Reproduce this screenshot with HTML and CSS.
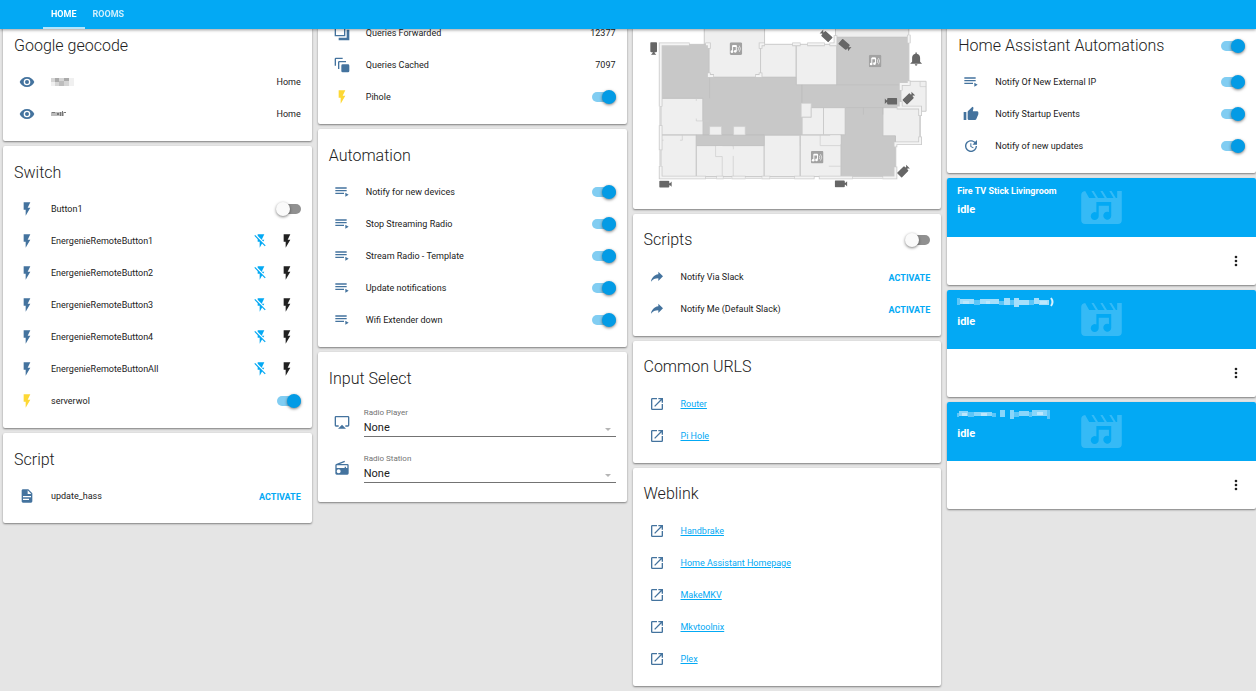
FILE: index.html
```html
<!DOCTYPE html>
<html lang="en">
<head>
<meta charset="utf-8">
<meta name="viewport" content="width=device-width, initial-scale=1">
<title>Home Assistant</title>
<link rel="stylesheet" href="styles.css">
</head>
<body>
<svg class="sprite" aria-hidden="true">
  <symbol id="eye" viewBox="0 0 24 24"><path d="M12,9A3,3 0 0,0 9,12A3,3 0 0,0 12,15A3,3 0 0,0 15,12A3,3 0 0,0 12,9M12,17A5,5 0 0,1 7,12A5,5 0 0,1 12,7A5,5 0 0,1 17,12A5,5 0 0,1 12,17M12,4.5C7,4.5 2.73,7.61 1,12C2.73,16.39 7,19.5 12,19.5C17,19.5 21.27,16.39 23,12C21.27,7.61 17,4.5 12,4.5Z"/></symbol>
  <symbol id="flash" viewBox="0 0 24 24"><path d="M7,2V13H10V22L17,10H13L17,2H7Z"/></symbol>
  <symbol id="flash-off" viewBox="0 0 24 24"><path d="M17,10H13L17,2H7V4.18L15.46,12.64M3.27,3L2,4.27L7,9.27V13H10V22L13.58,15.86L17.73,20L19,18.73L3.27,3Z"/></symbol>
  <symbol id="document" viewBox="0 0 24 24"><path d="M13,9H18.5L13,3.5V9M6,2H14L20,8V20A2,2 0 0,1 18,22H6C4.89,22 4,21.1 4,20V4C4,2.89 4.89,2 6,2M15,18V16H6V18H15M18,14V12H6V14H18Z"/></symbol>
  <symbol id="playlist" viewBox="0 0 24 24"><path d="M19,9H2V11H19V9M19,5H2V7H19V5M2,15H15V13H2V15M17,13V19L22,16L17,13Z"/></symbol>
  <symbol id="open" viewBox="0 0 24 24"><path d="M14,3V5H17.59L7.76,14.83L9.17,16.24L19,6.41V10H21V3M19,19H5V5H12V3H5C3.89,3 3,3.9 3,5V19A2,2 0 0,0 5,21H19A2,2 0 0,0 21,19V12H19V19Z"/></symbol>
  <symbol id="share" viewBox="0 0 24 24"><path d="M21,11L14,4V8C7,9 4,14 3,19C5.5,15.5 9,13.9 14,13.9V18L21,11Z"/></symbol>
  <symbol id="thumb" viewBox="0 0 24 24"><path d="M23,10C23,8.89 22.1,8 21,8H14.68L15.64,3.43C15.66,3.33 15.67,3.22 15.67,3.11C15.67,2.7 15.5,2.32 15.23,2.05L14.17,1L7.59,7.58C7.22,7.95 7,8.45 7,9V19A2,2 0 0,0 9,21H18C18.83,21 19.54,20.5 19.84,19.78L22.86,12.73C22.95,12.5 23,12.26 23,12V10M1,21H5V9H1V21Z"/></symbol>
  <symbol id="update" viewBox="0 0 24 24"><path d="M21,10.12H14.22L16.96,7.3C14.23,4.6 9.81,4.5 7.08,7.2C4.35,9.91 4.35,14.28 7.08,17C9.81,19.7 14.23,19.7 16.96,17C18.32,15.65 19,14.08 19,12.1H21C21,14.08 20.12,16.65 18.36,18.39C14.85,21.87 9.15,21.87 5.64,18.39C2.14,14.92 2.11,9.28 5.62,5.81C9.13,2.34 14.76,2.34 18.27,5.81L21,3V10.12M12.5,8V12.25L16,14.33L15.28,15.54L11,13V8H12.5Z"/></symbol>
  <symbol id="airplay" viewBox="0 0 24 24"><path d="M6,22H18L12,16M21,3H3A2,2 0 0,0 1,5V17A2,2 0 0,0 3,19H7V17H3V5H21V17H17V19H21A2,2 0 0,0 23,17V5A2,2 0 0,0 21,3Z"/></symbol>
  <symbol id="radio" viewBox="0 0 24 24"><path d="M20,6A2,2 0 0,1 22,8V20A2,2 0 0,1 20,22H4A2,2 0 0,1 2,20V8C2,7.15 2.53,6.42 3.28,6.13L15.71,1L16.47,2.83L8.83,6H20M20,8H4V12H16V10H18V12H20V8M7,14A3,3 0 0,0 4,17A3,3 0 0,0 7,20A3,3 0 0,0 10,17A3,3 0 0,0 7,14Z"/></symbol>
  <symbol id="forwarded" viewBox="0 0 24 24"><path fill-rule="evenodd" d="M1,1H17V17H1ZM3,3V15H15V3ZM19,7H23V23H7V19H19Z"/></symbol>
  <symbol id="cached" viewBox="0 0 24 24"><path d="M13,11H21A2,2 0 0,1 23,13V21A2,2 0 0,1 21,23H13A2,2 0 0,1 11,21V13A2,2 0 0,1 13,11ZM6,18V8A2,2 0 0,1 8,6H18V8H8V18ZM1,13V3A2,2 0 0,1 3,1H13V3H3V13Z"/></symbol>
  <symbol id="dots" viewBox="0 0 24 24"><path d="M12,16A2,2 0 0,1 14,18A2,2 0 0,1 12,20A2,2 0 0,1 10,18A2,2 0 0,1 12,16M12,10A2,2 0 0,1 14,12A2,2 0 0,1 12,14A2,2 0 0,1 10,12A2,2 0 0,1 12,10M12,4A2,2 0 0,1 14,6A2,2 0 0,1 12,8A2,2 0 0,1 10,6A2,2 0 0,1 12,4Z"/></symbol>
  <symbol id="media" viewBox="0 0 123 100"><path fill-rule="evenodd" d="M12,0L24,21H44L31,0H38L51,21H71L58,0H65L78,21H98L85,0H92L105,21H109V0H123V88Q123,100 111,100H12Q0,100 0,88V12Q0,2 12,0ZM46,33V65A12,12 0 1 0 53,76V45H84V64A12,12 0 1 0 91,75V33Z"/></symbol>
  <symbol id="camera" viewBox="-20 -12 40 24"><path d="M-17,-10H8Q11,-10 11,-7V-3H13L18,-8V8L13,3H11V7Q11,10 8,10H-17Q-19,10 -19,8V-8Q-19,-10 -17,-10Z"/></symbol>
  <symbol id="speaker" viewBox="0 0 38 38"><rect width="38" height="38" rx="5" fill="#a2a2a2"/><g fill="none" stroke="#fff" stroke-width="3"><path d="M9,27V10H20V26"/><path d="M25,14Q29,19 25,25M29,10Q36,19 29,29" stroke-width="2"/></g><path fill="#fff" d="M9,9H21V14H9Z"/><circle cx="7" cy="28" r="4" fill="#fff"/><circle cx="17" cy="27" r="4" fill="#fff"/></symbol>
</svg>

<header class="topbar">
  <nav class="tabs">
    <a class="tab tab--active" href="#home">HOME</a>
    <a class="tab" href="#rooms">ROOMS</a>
  </nav>
</header>

<main class="board">
  <div class="column">
    <section class="card card--first">
      <div class="card-head"><h2>Google geocode</h2></div>
      <div class="row"><svg class="icon"><use href="#eye"/></svg>
        <span class="name"><svg class="redacted" viewBox="0 0 24 8"><path fill="#d5d5d5" d="M0,0H18V4H0ZM4,4H18V8H4Z"/><path fill="#aaa" d="M4,0H8V4H4ZM13,0H18V3H13Z"/><path fill="#bdbdbd" d="M8,3H13V8H8Z"/><path fill="#f0f0f0" d="M18,0H23V8H18ZM0,4H4V8H0Z"/></svg></span>
        <span class="value">Home</span></div>
      <div class="row"><svg class="icon"><use href="#eye"/></svg>
        <span class="name"><svg class="redacted" viewBox="0 0 24 8"><path fill="#bbb" d="M0,2H13V6H0Z"/><path fill="#777" d="M1,2H4V3H1ZM6,3H8V5H6ZM9,2H10V6H9ZM11,1H12V6H11ZM13,2H15V3H13Z"/></svg></span>
        <span class="value">Home</span></div>
    </section>

    <section class="card">
      <div class="card-head"><h2>Switch</h2></div>
      <div class="row"><svg class="icon"><use href="#flash"/></svg><label class="name" for="b1">Button1</label><input class="toggle" type="checkbox" id="b1"></div>
      <div class="row"><svg class="icon"><use href="#flash"/></svg><span class="name">EnergenieRemoteButton1</span><button class="power power--off" aria-label="Turn off"><svg class="icon-sm"><use href="#flash-off"/></svg></button><button class="power" aria-label="Turn on"><svg class="icon-sm"><use href="#flash"/></svg></button></div>
      <div class="row"><svg class="icon"><use href="#flash"/></svg><span class="name">EnergenieRemoteButton2</span><button class="power power--off" aria-label="Turn off"><svg class="icon-sm"><use href="#flash-off"/></svg></button><button class="power" aria-label="Turn on"><svg class="icon-sm"><use href="#flash"/></svg></button></div>
      <div class="row"><svg class="icon"><use href="#flash"/></svg><span class="name">EnergenieRemoteButton3</span><button class="power power--off" aria-label="Turn off"><svg class="icon-sm"><use href="#flash-off"/></svg></button><button class="power" aria-label="Turn on"><svg class="icon-sm"><use href="#flash"/></svg></button></div>
      <div class="row"><svg class="icon"><use href="#flash"/></svg><span class="name">EnergenieRemoteButton4</span><button class="power power--off" aria-label="Turn off"><svg class="icon-sm"><use href="#flash-off"/></svg></button><button class="power" aria-label="Turn on"><svg class="icon-sm"><use href="#flash"/></svg></button></div>
      <div class="row"><svg class="icon"><use href="#flash"/></svg><span class="name">EnergenieRemoteButtonAll</span><button class="power power--off" aria-label="Turn off"><svg class="icon-sm"><use href="#flash-off"/></svg></button><button class="power" aria-label="Turn on"><svg class="icon-sm"><use href="#flash"/></svg></button></div>
      <div class="row"><svg class="icon icon--on"><use href="#flash"/></svg><label class="name" for="wol">serverwol</label><input class="toggle" type="checkbox" id="wol" checked></div>
    </section>

    <section class="card">
      <div class="card-head"><h2>Script</h2></div>
      <div class="row"><svg class="icon"><use href="#document"/></svg><span class="name">update_hass</span><button class="activate">ACTIVATE</button></div>
    </section>
  </div>

  <div class="column">
    <section class="card card--list-first">
      <div class="row"><svg class="icon"><use href="#forwarded"/></svg><span class="name">Queries Forwarded</span><span class="value">12377</span></div>
      <div class="row"><svg class="icon"><use href="#cached"/></svg><span class="name">Queries Cached</span><span class="value">7097</span></div>
      <div class="row"><svg class="icon icon--on"><use href="#flash"/></svg><label class="name" for="pihole">Pihole</label><input class="toggle" type="checkbox" id="pihole" checked></div>
    </section>

    <section class="card">
      <div class="card-head"><h2>Automation</h2></div>
      <div class="row"><svg class="icon"><use href="#playlist"/></svg><label class="name" for="a1">Notify for new devices</label><input class="toggle" type="checkbox" id="a1" checked></div>
      <div class="row"><svg class="icon"><use href="#playlist"/></svg><label class="name" for="a2">Stop Streaming Radio</label><input class="toggle" type="checkbox" id="a2" checked></div>
      <div class="row"><svg class="icon"><use href="#playlist"/></svg><label class="name" for="a3">Stream Radio - Template</label><input class="toggle" type="checkbox" id="a3" checked></div>
      <div class="row"><svg class="icon"><use href="#playlist"/></svg><label class="name" for="a4">Update notifications</label><input class="toggle" type="checkbox" id="a4" checked></div>
      <div class="row"><svg class="icon"><use href="#playlist"/></svg><label class="name" for="a5">Wifi Extender down</label><input class="toggle" type="checkbox" id="a5" checked></div>
    </section>

    <section class="card">
      <div class="card-head"><h2>Input Select</h2></div>
      <div class="row row--field"><svg class="icon"><use href="#airplay"/></svg>
        <div class="field"><label for="player">Radio Player</label><select id="player"><option>None</option></select><svg class="caret" viewBox="0 0 6 3"><path d="M0,0H6L3,3Z"/></svg></div></div>
      <div class="row row--field"><svg class="icon"><use href="#radio"/></svg>
        <div class="field"><label for="station">Radio Station</label><select id="station"><option>None</option></select><svg class="caret" viewBox="0 0 6 3"><path d="M0,0H6L3,3Z"/></svg></div></div>
    </section>
  </div>

  <div class="column">
    <section class="card card--map">
      <svg class="floorplan" viewBox="0 0 927 567" role="img" aria-label="Floor plan">
        <g fill="#efefef" stroke="#cbcbcb" stroke-width="3">
          <path d="M214,10H395V73H383V172H228V73H214Z"/>
          <path d="M383,73H490V172H383ZM490,73H612V195H490ZM608,10H828V52H608Z"/>
          <path d="M804,184H880V274H866V260H804ZM750,263H862V369H788V348H750Z"/>
          <path d="M84,235H210V303H230V345H84ZM84,345H190V470H84ZM190,377H394V470H190Z"/>
          <path d="M394,346H502V470H394ZM502,345H625V470H502ZM507,263H637V345H507ZM572,263V345"/>
        </g>
        <g fill="#c8c8c8" stroke="#c0c0c0" stroke-width="2">
          <path d="M84,73H228V172H490V195H507V345H210V235H84Z"/>
          <path d="M612,52H828V195H804V263H750V348H788V470H625V345H638V263H507V195H612Z"/>
          <path d="M190,345H394V377H190Z"/>
        </g>
        <path fill="none" stroke="#bcbcbc" stroke-width="2" d="M230,172V235M507,195V250M612,195H804M692,263V284M638,263H750V284M210,345H394"/>
        <g fill="#efefef" stroke="#cbcbcb" stroke-width="2">
          <path d="M505,250H535V292H505ZM230,320H266V345H230ZM302,320H337V345H302Z"/>
          <path fill="none" d="M190,235V243M190,296V303H228M148,345V361H141M84,361H92M248,378V410H268V470M268,380H300M301,378V388M301,408V470M562,345V377H625M588,439H625M535,263V292H507V345M862,184V200H880M502,377V345"/>
        </g>
        <path fill="#efefef" d="M250,379H299V387H250ZM592,346H623V372H592Z"/>
        <path id="wall-lines" fill="none" stroke="#cacaca" stroke-width="11" d="M170,73H83V260M83,316V391M83,438V473H219M228,86V73H217M383,86V73H396M228,158V168H243M383,158V168H367M478,73H503M523,73H576M590,73H608V46M828,44V70M828,182V192H804V212M804,244V262M792,263H862V288M862,350V370H788V382M788,440V473H749M660,473H558M545,473H484M412,473H386M338,473H296M272,473H250"/>
        <path fill="none" stroke="#f4f4f4" stroke-width="6" d="M168,73H83V258M83,318V389M83,440V473H217M228,84V73H219M383,84V73H394M228,160V168H241M383,160V168H369M480,73H501M525,73H574M592,73H608V48M828,46V68M828,184V192H804V210M804,246V260M794,263H862V286M862,352V370H788V380M788,442V473H751M658,473H560M543,473H486M410,473H388M336,473H298M270,473H252"/>
        <path fill="none" stroke="#cacaca" stroke-width="3" d="M81,260V316M81,391V438M219,475H250M272,475H296M338,475H386M412,475H484M660,475H749M789,382V440M862,288V350M828,70V182"/>
        <g fill="#666">
          <use href="#camera" x="-20" y="-12" width="40" height="24" transform="translate(98 493)"/>
          <use href="#camera" x="-20" y="-12" width="40" height="24" transform="translate(625 492)"/>
          <use href="#camera" x="-20" y="-12" width="40" height="24" transform="translate(774 244) rotate(180)"/>
          <use href="#camera" x="-20" y="-12" width="40" height="24" transform="translate(62 86) rotate(90)"/>
          <use href="#camera" x="-20" y="-12" width="40" height="24" transform="translate(579 47) rotate(222)"/>
          <use href="#camera" x="-20" y="-12" width="40" height="24" transform="translate(637 76) rotate(40)"/>
          <use href="#camera" x="-20" y="-12" width="40" height="24" transform="translate(829 234) rotate(-45)"/>
          <use href="#camera" x="-20" y="-12" width="40" height="24" transform="translate(813 453) rotate(-45)"/>
          <path transform="translate(826 93) scale(2)" d="M14,20A2,2 0 0,1 12,22A2,2 0 0,1 10,20H14M12,2A1,1 0 0,1 13,3V4.08C15.84,4.56 18,7.03 18,10V16L21,19H3L6,16V10C6,7.03 8.16,4.56 11,4.08V3A1,1 0 0,1 12,2Z"/>
        </g>
        <use href="#speaker" x="290" y="67" width="38" height="38"/>
        <use href="#speaker" x="708" y="104" width="38" height="38"/>
        <use href="#speaker" x="534" y="393" width="38" height="38"/>
      </svg>
    </section>

    <section class="card">
      <div class="card-head"><h2>Scripts</h2><input class="toggle" type="checkbox" aria-label="Scripts"></div>
      <div class="row"><svg class="icon"><use href="#share"/></svg><span class="name">Notify Via Slack</span><button class="activate">ACTIVATE</button></div>
      <div class="row"><svg class="icon"><use href="#share"/></svg><span class="name">Notify Me (Default Slack)</span><button class="activate">ACTIVATE</button></div>
    </section>

    <section class="card">
      <div class="card-head"><h2>Common URLS</h2></div>
      <div class="row"><svg class="icon"><use href="#open"/></svg><a class="name" href="#router">Router</a></div>
      <div class="row"><svg class="icon"><use href="#open"/></svg><a class="name" href="#pihole">Pi Hole</a></div>
    </section>

    <section class="card">
      <div class="card-head"><h2>Weblink</h2></div>
      <div class="row"><svg class="icon"><use href="#open"/></svg><a class="name" href="#handbrake">Handbrake</a></div>
      <div class="row"><svg class="icon"><use href="#open"/></svg><a class="name" href="#homepage">Home Assistant Homepage</a></div>
      <div class="row"><svg class="icon"><use href="#open"/></svg><a class="name" href="#makemkv">MakeMKV</a></div>
      <div class="row"><svg class="icon"><use href="#open"/></svg><a class="name" href="#mkvtoolnix">Mkvtoolnix</a></div>
      <div class="row"><svg class="icon"><use href="#open"/></svg><a class="name" href="#plex">Plex</a></div>
    </section>
  </div>

  <div class="column">
    <section class="card card--first">
      <div class="card-head"><h2>Home Assistant Automations</h2><input class="toggle" type="checkbox" aria-label="Home Assistant Automations" checked></div>
      <div class="row"><svg class="icon"><use href="#playlist"/></svg><label class="name" for="h1">Notify Of New External IP</label><input class="toggle" type="checkbox" id="h1" checked></div>
      <div class="row"><svg class="icon"><use href="#thumb"/></svg><label class="name" for="h2">Notify Startup Events</label><input class="toggle" type="checkbox" id="h2" checked></div>
      <div class="row"><svg class="icon"><use href="#update"/></svg><label class="name" for="h3">Notify of new updates</label><input class="toggle" type="checkbox" id="h3" checked></div>
    </section>

    <section class="player">
      <div class="player-banner">
        <div class="player-text"><span class="player-name">Fire TV Stick Livingroom</span><span class="player-state">idle</span></div>
        <svg class="cover"><use href="#media"/></svg>
      </div>
      <div class="player-controls"><button class="more" aria-label="More"><svg class="icon"><use href="#dots"/></svg></button></div>
    </section>
    <section class="player">
      <div class="player-banner">
        <div class="player-text"><span class="player-name"><svg class="redacted-title" viewBox="0 0 98 10"><path fill="#a6dffb" d="M2,2H17V7H2ZM23,2H42V7H23ZM47,1H53V8H47ZM57,1H62V10H57ZM62,3H72V8H62ZM77,1H82V7H77ZM82,3H92V8H82Z"/><path fill="#5dc6f8" d="M0,1H3V8H0ZM17,3H23V8H17ZM42,4H47V8H42ZM53,3H57V8H53ZM72,3H77V8H72Z"/><path fill="#bce7fc" d="M6,4H12V7H6ZM29,4H33V7H29ZM83,4H90V7H83Z"/><path fill="none" stroke="#d8f1fd" stroke-width="2" d="M94,1Q97,5 94,9"/></svg></span><span class="player-state">idle</span></div>
        <svg class="cover"><use href="#media"/></svg>
      </div>
      <div class="player-controls"><button class="more" aria-label="More"><svg class="icon"><use href="#dots"/></svg></button></div>
    </section>
    <section class="player">
      <div class="player-banner">
        <div class="player-text"><span class="player-name"><svg class="redacted-title" viewBox="0 0 98 10"><path fill="#8ad6fa" d="M2,2H11V7H2ZM17,3H35V7H17ZM43,1H48V8H43ZM53,1H57V10H53ZM62,2H72V7H62ZM75,1H90V7H75Z"/><path fill="#5dc6f8" d="M0,4H2V8H0ZM11,3H17V8H11ZM35,4H39V8H35ZM57,3H62V8H57ZM72,3H75V8H72ZM90,1H93V10H90Z"/><path fill="#bce7fc" d="M5,4H10V7H5ZM24,4H30V7H24ZM80,3H86V6H80Z"/></svg></span><span class="player-state">idle</span></div>
        <svg class="cover"><use href="#media"/></svg>
      </div>
      <div class="player-controls"><button class="more" aria-label="More"><svg class="icon"><use href="#dots"/></svg></button></div>
    </section>
  </div>
</main>
</body>
</html>
```
FILE: styles.css
```css
* { box-sizing: border-box; }

body {
  margin: 0;
  background: #e5e5e5;
  color: #212121;
  font: 400 9px/16px Roboto, "Liberation Sans", sans-serif;
}

button {
  margin: 0;
  padding: 0;
  border: 0;
  background: none;
  font: inherit;
  color: inherit;
  cursor: pointer;
}

svg { display: block; fill: currentColor; }
.sprite { position: absolute; width: 0; height: 0; }

/* Top bar stays above the scrolled board */
.topbar {
  position: fixed;
  z-index: 1;
  top: 0;
  left: 0;
  right: 0;
  height: 29px;
  padding-left: 43px;
  background: #03a9f4;
  box-shadow: 0 1px 3px rgba(0, 0, 0, .4);
}
.tabs { display: flex; height: 100%; }
.tab {
  display: flex;
  align-items: center;
  padding: 0 8px;
  border-bottom: 2px solid transparent;
  color: rgba(255, 255, 255, .8);
  font-weight: 700;
  text-decoration: none;
}
.tab--active { color: #fff; border-color: #b3e5fc; }

.board {
  display: grid;
  grid-template-columns: repeat(4, minmax(0, 1fr));
  column-gap: 6px;
  padding: 14px 0 4px 3px;
}
.column { display: flex; flex-direction: column; gap: 5px; }

.card, .player {
  background: #fff;
  border-radius: 2px;
  box-shadow: 0 1px 2px rgba(0, 0, 0, .45);
}
.card { padding: 0 11px 11px; }
.card--first { padding-top: 5px; }
.card--list-first { padding-top: 3px; }
.card--map { padding: 6px 0 0; }
.floorplan { width: 100%; height: auto; }

.card-head {
  display: flex;
  align-items: center;
  justify-content: space-between;
  height: 47px;
  padding-top: 6px;
}
h2 { margin: 0; font-size: 16px; line-height: 24px; font-weight: 300; }

.row { display: flex; align-items: center; height: 32px; }
.icon {
  flex: none;
  width: 16px;
  height: 16px;
  margin: 0 16px 0 5px;
  color: #44739e;
}
.icon--on { color: #fdd835; }
.name { margin-right: auto; }
a.name { color: #03a9f4; }
.redacted { width: 24px; height: 8px; }

.activate { padding-top: 2px; color: #03a9f4; font-weight: 700; }

.power { margin-left: 10px; }
.icon-sm { width: 16px; height: 16px; }
.power:last-child { padding-right: 6px; }
.power--off { color: #03a9f4; }

.toggle {
  appearance: none;
  flex: none;
  display: flex;
  align-items: center;
  width: 24px;
  height: 10px;
  margin: 0;
  border-radius: 5px;
  background: #909090;
}
.toggle::before {
  content: "";
  flex: none;
  width: 14px;
  height: 14px;
  margin-left: -1px;
  border-radius: 50%;
  background: #fafafa;
  box-shadow: 0 1px 3px rgba(0, 0, 0, .5);
}
.toggle:checked { background: #81cdf2; }
.toggle:checked::before { margin-left: 10px; background: #039be5; }

.row--field { height: 46px; }
.row--field .icon { margin-right: 14px; }
.field { position: relative; flex: 1; }
.field label { display: block; color: #737373; font-size: 8px; line-height: 12px; }
.field select {
  appearance: none;
  display: block;
  width: 100%;
  height: 18px;
  padding: 0;
  border: 0;
  border-bottom: 1px solid #737373;
  border-radius: 0;
  background: none;
  color: #212121;
  font: 400 11px/16px Roboto, sans-serif;
}
.caret { position: absolute; right: 5px; bottom: 6px; width: 6px; height: 3px; color: #b5b5b5; pointer-events: none; }

.player-banner {
  display: grid;
  grid-template-columns: 1fr auto 1fr;
  height: 59px;
  padding: 5px 10px 0;
  border-radius: 2px 2px 0 0;
  background: #03a9f4;
  color: #fff;
}
.player-text { display: flex; flex-direction: column; gap: 2px; white-space: nowrap; }
.player-name { height: 17px; font-weight: 700; }
.player-state { font-size: 11px; font-weight: 700; }
.redacted-title { width: 98px; height: 14px; }
.cover { width: 41px; height: 33px; margin-top: 8px; color: rgba(255, 255, 255, .2); }
.player-controls { display: flex; align-items: center; justify-content: flex-end; height: 48px; }
.more .icon { margin: 0 12px 0 0; color: #212121; }
```
